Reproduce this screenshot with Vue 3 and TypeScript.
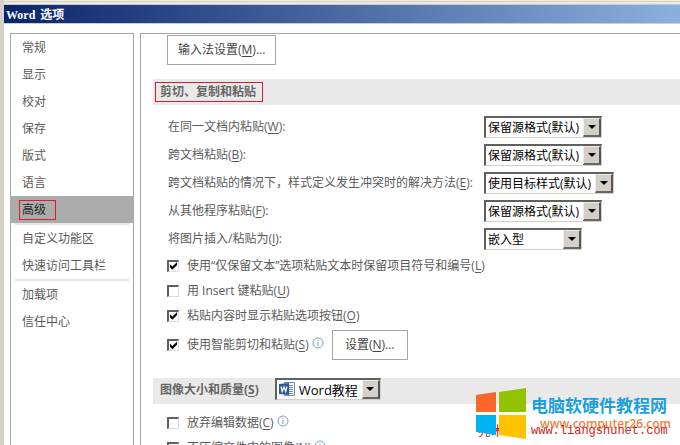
<script setup lang="ts">
import { ref } from 'vue'

interface NavItem { text: string; group: number }
interface PasteRow { id: string; text: string; key: string; value: string; size: string }
interface CheckRow { id: string; text: string; key: string; on: boolean; info?: boolean; button?: boolean }

const nav: NavItem[] = [
  { text: '常规', group: 0 }, { text: '显示', group: 0 }, { text: '校对', group: 0 },
  { text: '保存', group: 0 }, { text: '版式', group: 0 }, { text: '语言', group: 0 },
  { text: '高级', group: 0 }, { text: '自定义功能区', group: 1 },
  { text: '快速访问工具栏', group: 1 }, { text: '加载项', group: 2 }, { text: '信任中心', group: 2 },
]
const groups = [0, 1, 2].map((g) => nav.filter((n) => n.group === g))
const active = ref('高级')

const pasteRows: PasteRow[] = [
  { id: 'p1', text: '在同一文档内粘贴', key: 'W', value: '保留源格式(默认)', size: 'medium' },
  { id: 'p2', text: '跨文档粘贴', key: 'B', value: '保留源格式(默认)', size: 'medium' },
  { id: 'p3', text: '跨文档粘贴的情况下，样式定义发生冲突时的解决方法', key: 'E', value: '使用目标样式(默认)', size: 'wide' },
  { id: 'p4', text: '从其他程序粘贴', key: 'F', value: '保留源格式(默认)', size: 'medium' },
  { id: 'p5', text: '将图片插入/粘贴为', key: 'I', value: '嵌入型', size: 'small' },
]
const checks = ref<CheckRow[]>([
  { id: 'c1', text: '使用“仅保留文本”选项粘贴文本时保留项目符号和编号', key: 'L', on: true },
  { id: 'c2', text: '用 Insert 键粘贴', key: 'U', on: false },
  { id: 'c3', text: '粘贴内容时显示粘贴选项按钮', key: 'O', on: true },
  { id: 'c4', text: '使用智能剪切和粘贴', key: 'S', on: true, info: true, button: true },
])
const imageChecks = ref<CheckRow[]>([
  { id: 'i1', text: '放弃编辑数据', key: 'C', on: false, info: true },
  { id: 'i2', text: '不压缩文件中的图像', key: 'N', on: false, info: true },
])
</script>

<template>
  <div class="window">
    <header class="title">Word <span class="title-cjk">选项</span></header>
    <div class="body">
      <nav class="side">
        <div v-for="(g, i) in groups" :key="i" class="group">
          <button
            v-for="n in g" :key="n.text" type="button" class="nav-item"
            :class="{ active: n.text === active }" @click="active = n.text"
          ><span class="nav-text">{{ n.text }}</span></button>
        </div>
      </nav>

      <main class="panel">
        <button type="button" class="push ime">输入法设置(<u>M</u>)...</button>

        <h2 class="section"><span class="mark">剪切、复制和粘贴</span></h2>
        <div class="paste">
          <template v-for="r in pasteRows" :key="r.id">
            <label :for="r.id">{{ r.text }}(<u>{{ r.key }}</u>):</label>
            <span class="combo" :class="r.size">
              <select :id="r.id"><option>{{ r.value }}</option></select>
              <span class="arrow"></span>
            </span>
          </template>
        </div>

        <div class="checks">
          <div v-for="c in checks" :key="c.id" class="check-row" :class="{ tall: c.button }">
            <input :id="c.id" v-model="c.on" type="checkbox">
            <label :for="c.id">{{ c.text }}(<u>{{ c.key }}</u>)</label>
            <svg v-if="c.info" class="info" viewBox="0 0 12 12">
              <circle cx="6" cy="6" r="5" /><path d="M6 5v4M6 3v1" />
            </svg>
            <button v-if="c.button" type="button" class="push">设置(<u>N</u>)...</button>
          </div>
        </div>

        <div class="section image-section">
          <label for="doc">图像大小和质量(<u>S</u>)</label>
          <span class="combo doc">
            <svg class="word" viewBox="0 0 16 16">
              <path d="M5.500 1.500h10v13h-10z" fill="#fff" stroke="#6a87b5" />
              <path d="M10 4.500h4M10 6.500h4M10 8.500h4M10 10.500h4M7 12.500h7" stroke="#6a87b5" />
              <path d="M0 3l10-1v12L0 13z" fill="#2b5797" />
              <path d="M2 5.500l1.200 5L5 6l1.700 4.500L8 5.500" fill="none" stroke="#fff" stroke-width="1.200" />
            </svg>
            <select id="doc"><option>Word教程</option></select>
            <span class="arrow"></span>
          </span>
        </div>
        <div class="checks image-checks">
          <div v-for="c in imageChecks" :key="c.id" class="check-row">
            <input :id="c.id" v-model="c.on" type="checkbox">
            <label :for="c.id">{{ c.text }}(<u>{{ c.key }}</u>)</label>
            <svg class="info" viewBox="0 0 12 12">
              <circle cx="6" cy="6" r="5" /><path d="M6 5v4M6 3v1" />
            </svg>
          </div>
        </div>
      </main>
    </div>

    <aside class="brand">
      <span class="under">亮术</span>
      <svg class="flag" viewBox="0 0 50 52">
        <path d="M0 7l20-3v20H0z" fill="#f8682c" />
        <path d="M23 4l27-4v24H23z" fill="#91c300" />
        <path d="M0 27h20v20L0 44z" fill="#00b4f1" />
        <path d="M23 27h27v24l-27-4z" fill="#ffc300" />
      </svg>
      <div class="brand-text">
        <strong>电脑软硬件教程网</strong>
        <span class="url">www.computer26.com</span>
        <span class="url2">www.liangshunet.com</span>
      </div>
    </aside>
  </div>
</template>

<style>
body { margin: 0; background: #fff; }
</style>

<style scoped>
.window {
  position: relative;
  box-sizing: border-box;
  height: 100vh;
  overflow: hidden;
  padding-top: 5px;
  border-left: 4px solid #d4d0c8;
  background: linear-gradient(#f0eedf 0 1px, #d4d0c8 1px 2px, #eceade 2px 4px, #c4cad6 4px 5px, #fff 5px);
  color: #5a5a5a;
  font: 12px/18px "Open Sans", "Noto Sans CJK SC", sans-serif;
}
button, select { font: inherit; color: inherit; }
u { text-decoration: underline; text-underline-offset: 2px; }
.title {
  height: 18px;
  padding-left: 2px;
  background: linear-gradient(90deg, #0a246a, #8cb0de);
  border-bottom: 1px solid #c4cde0;
  color: #fff;
  font: bold 12px/18px "Liberation Serif", serif;
}
.title-cjk { padding-left: 2px; font-family: "Noto Sans CJK SC", sans-serif; }
.body { display: flex; gap: 6px; padding: 9px 0 0 6px; height: 100%; }
.side {
  flex: none;
  box-sizing: border-box;
  width: 124px;
  border: 1px solid #a6a6aa;
}
.group + .group { margin: 0 4px; border-top: 2px solid #e6e6e6; }
.group + .group .nav-item { padding-left: 4px; }
.nav-item {
  display: flex;
  align-items: center;
  width: 100%;
  height: 27px;
  padding: 0 0 0 8px;
  border: 0;
  background: none;
  text-align: left;
}
.nav-text { padding: 0 2px; border: 1px solid transparent; white-space: nowrap; }
.active { background: #ababab; color: #262626; }
.active .nav-text { border-color: #d81e28; padding-right: 9px; }
.panel {
  flex: 1;
  min-width: 0;
  padding: 1px 0 0 12px;
  border: solid #a6a6aa;
  border-width: 1px 0 0 1px;
}
.push {
  min-width: 76px;
  height: 30px;
  padding: 0 10px;
  border: 1px solid #a6a6aa;
  background: #fff;
  color: #444;
  white-space: nowrap;
}
.ime { display: block; margin-left: 14px; }
.section {
  display: flex;
  align-items: center;
  box-sizing: border-box;
  height: 26px;
  margin: 14px 0 0;
  padding-left: 2px;
  background: #e9e9e9;
  font-size: 12px;
  font-weight: bold;
  color: #666;
}
.mark { padding: 0 6px 0 4px; border: 1px solid #d81e28; }
.paste {
  display: grid;
  grid-template-columns: 316px auto;
  grid-auto-rows: 28px;
  align-items: center;
  justify-content: start;
  padding: 8px 0 0 15px;
  white-space: nowrap;
}
.combo {
  position: relative;
  display: flex;
  box-sizing: border-box;
  height: 22px;
  border: 1px solid #d4d0c8;
  border-top: 2px solid #606060;
  border-left: 2px solid #606060;
  background: #fff;
  color: #000;
}
.medium { width: 118px; }
.wide { width: 130px; }
.small { width: 98px; }
.combo select {
  flex: 1;
  min-width: 0;
  padding: 0 0 0 2px;
  border: 0;
  appearance: none;
  background: transparent;
  line-height: 18px;
}
.arrow {
  display: flex;
  align-items: center;
  justify-content: center;
  flex: none;
  box-sizing: border-box;
  width: 18px;
  border: 1px solid #eeece6;
  border-right: 2px solid #555;
  border-bottom: 2px solid #666;
  background: #d4d0c8;
  pointer-events: none;
}
.arrow::before {
  content: "";
  border: 4px solid transparent;
  border-top-color: #000;
  border-bottom: 0;
}
.checks { padding: 0 0 0 14px; }
.check-row { display: flex; align-items: center; height: 25px; white-space: nowrap; }
.tall { height: 34px; }
.check-row input {
  appearance: none;
  box-sizing: border-box;
  width: 12px;
  height: 12px;
  margin: 0 8px 0 0;
  border: 1px solid #dcdcdc;
  border-top: 2px solid #606060;
  border-left: 2px solid #606060;
  background: #fff;
}
.check-row input:checked::before {
  content: "";
  display: block;
  width: 9px;
  height: 9px;
  background: #000;
  clip-path: polygon(10% 30%, 38% 56%, 90% 6%, 90% 40%, 38% 92%, 10% 64%);
}
.info {
  width: 12px;
  height: 12px;
  margin: 0 8px 4px 3px;
  fill: #fff;
  stroke: #7f9fc4;
}
.image-section { align-items: flex-start; margin-top: 16px; padding-left: 7px; gap: 16px; }
.image-section label { line-height: 24px; }
.doc { width: 106px; font-weight: normal; }
.doc .word { flex: none; width: 16px; height: 16px; margin: 1px 0 0 2px; }
.doc select { padding-left: 4px; font-size: 13px; }
.image-checks { padding-top: 6px; }
.brand {
  position: absolute;
  right: 6px;
  bottom: 5px;
  display: flex;
  gap: 5px;
}
.flag { position: relative; width: 50px; height: 52px; }
.under { position: absolute; left: 2px; bottom: 0; color: #d42020; font: 13px/18px "Liberation Serif", "Noto Sans CJK SC", serif; }
.brand-text { display: flex; flex-direction: column; width: 143px; white-space: nowrap; }
.brand-text strong { color: #1c9fe0; font: bold 17px/22px "Noto Sans CJK SC", sans-serif; padding-top: 6px; }
.url { padding-left: 9px; color: #f08040; font: 600 12px/16px "Open Sans", sans-serif; }
.url2 { margin-top: -8px; color: #d42020; font: 12px/14px "Liberation Mono", monospace; }
</style>
